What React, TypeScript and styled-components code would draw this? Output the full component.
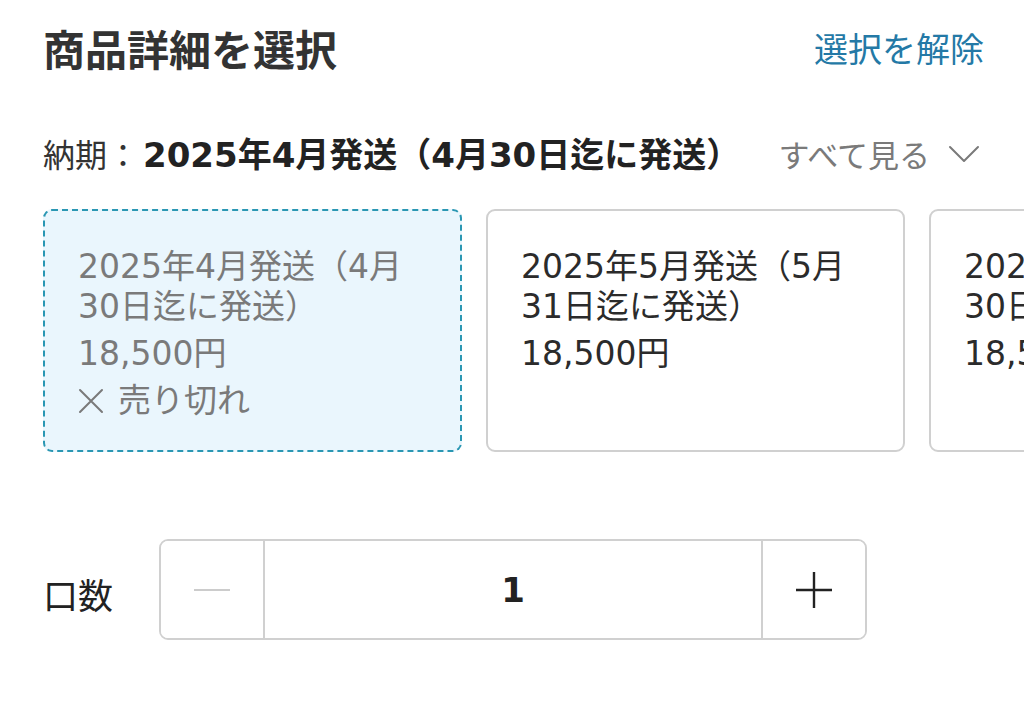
import React, { FC } from 'react'
import styled, { createGlobalStyle } from 'styled-components'

const GlobalStyle = createGlobalStyle`
  html, body {
    margin: 0;
    padding: 0;
    background: #ffffff;
    overflow: hidden;
  }
  body {
    font-family: "Noto Sans CJK JP", "Noto Sans", sans-serif;
    color: #333333;
  }
`

// digits in the reference are wider than Noto's, DejaVu matches them better
const numFont = `"DejaVu Sans", "Noto Sans CJK JP", sans-serif`

interface Option {
  id: string
  label: string
  price: string
  soldOut?: boolean
  selected?: boolean
}

const options: Option[] = [
  { id: 'apr', label: '2025年4月発送（4月30日迄に発送）', price: '18,500円', soldOut: true, selected: true },
  { id: 'may', label: '2025年5月発送（5月31日迄に発送）', price: '18,500円' },
  { id: 'jun', label: '2025年6月発送（6月30日迄に発送）', price: '18,500円' },
]

const Page = styled.div`
  padding: 24px 40px 0 43px;
`

const Header = styled.div`
  display: flex;
  align-items: center;
  justify-content: space-between;
  height: 48px;
`

const Title = styled.h1`
  margin: 0;
  font-size: 42px;
  font-weight: 700;
  line-height: 48px;
  color: #333333;
`

const ClearLink = styled.a`
  font-size: 34px;
  line-height: 48px;
  color: #2479a6;
  text-decoration: none;
  cursor: pointer;
`

const DeliveryRow = styled.div`
  display: flex;
  align-items: center;
  justify-content: space-between;
  height: 44px;
  margin-top: 60px;
`

const DeliveryText = styled.div`
  font-size: 32px;
  line-height: 44px;
  color: #333333;
  white-space: nowrap;
`

const DeliveryValue = styled.span`
  margin-left: 4px;
  font-family: ${numFont};
  font-size: 34px;
  font-weight: 700;
  color: #222222;
`

const SeeAll = styled.button`
  display: flex;
  align-items: center;
  gap: 18px;
  padding: 0;
  border: none;
  background: none;
  font-family: inherit;
  font-size: 31px;
  line-height: 44px;
  color: #7a7a7a;
  margin-right: 4px;
  cursor: pointer;
`

const CardRow = styled.div`
  display: flex;
  gap: 24px;
  margin-top: 33px;
  margin-right: -40px;
  overflow: hidden;
`

const Card = styled.div<{ $selected?: boolean }>`
  flex: 0 0 419px;
  height: 243px;
  box-sizing: border-box;
  padding: 36px 20px 0 33px;
  border-radius: 9px;
  border: 2px ${({ $selected }) => ($selected ? 'dashed #2a97b3' : 'solid #d0d0d0')};
  background: ${({ $selected }) => ($selected ? '#eaf6fd' : '#ffffff')};
  color: ${({ $selected }) => ($selected ? '#7a7a7a' : '#2b2b2b')};
  font-family: ${numFont};
  font-size: 33px;
`

const CardLabel = styled.div`
  line-height: 40px;
  max-width: 332px;
`

const CardLine = styled.div`
  display: flex;
  align-items: center;
  gap: 14px;
  line-height: 40px;
  margin-top: 7px;
`

const QtyRow = styled.div`
  display: flex;
  align-items: center;
  margin-top: 87px;
`

const QtyLabel = styled.div`
  width: 116px;
  font-size: 35px;
  line-height: 44px;
  padding-top: 8px;
  color: #222222;
`

const Stepper = styled.div`
  display: flex;
  width: 708px;
  height: 101px;
  box-sizing: border-box;
  border: 2px solid #d0d0d0;
  border-radius: 9px;
  overflow: hidden;
`

const StepButton = styled.button<{ $disabled?: boolean }>`
  flex: 0 0 102px;
  display: flex;
  align-items: center;
  justify-content: center;
  padding: 0;
  border: none;
  background: #ffffff;
  color: ${({ $disabled }) => ($disabled ? '#cccccc' : '#222222')};
  cursor: ${({ $disabled }) => ($disabled ? 'default' : 'pointer')};
`

const StepValue = styled.div`
  flex: 1;
  display: flex;
  align-items: center;
  justify-content: center;
  border-left: 2px solid #d0d0d0;
  border-right: 2px solid #d0d0d0;
  font-family: ${numFont};
  font-size: 34px;
  font-weight: 700;
  color: #222222;
`

const Chevron: FC = () => (
  <svg width="32" height="20" viewBox="0 0 32 20" fill="none">
    <path d="M2 3 L16 17 L30 3" stroke="#7a7a7a" strokeWidth="2" strokeLinecap="round" strokeLinejoin="round" />
  </svg>
)

const Cross: FC = () => (
  <svg width="26" height="26" viewBox="0 0 26 26" fill="none">
    <path d="M2 2 L24 24 M24 2 L2 24" stroke="currentColor" strokeWidth="2" strokeLinecap="round" />
  </svg>
)

const Minus: FC = () => (
  <svg width="36" height="4" viewBox="0 0 36 4">
    <path d="M0 2 H36" stroke="currentColor" strokeWidth="2" />
  </svg>
)

const Plus: FC = () => (
  <svg width="36" height="36" viewBox="0 0 36 36">
    <path d="M0 18 H36 M18 0 V36" stroke="currentColor" strokeWidth="2.4" />
  </svg>
)

const App: FC = () => (
  <>
    <GlobalStyle />
    <Page>
      <Header>
        <Title>商品詳細を選択</Title>
        <ClearLink>選択を解除</ClearLink>
      </Header>

      <DeliveryRow>
        <DeliveryText>
          納期：<DeliveryValue>2025年4月発送（4月30日迄に発送）</DeliveryValue>
        </DeliveryText>
        <SeeAll>
          すべて見る
          <Chevron />
        </SeeAll>
      </DeliveryRow>

      <CardRow>
        {options.map((o) => (
          <Card key={o.id} $selected={o.selected}>
            <CardLabel>{o.label}</CardLabel>
            <CardLine>{o.price}</CardLine>
            {o.soldOut && (
              <CardLine>
                <Cross />
                売り切れ
              </CardLine>
            )}
          </Card>
        ))}
      </CardRow>

      <QtyRow>
        <QtyLabel>口数</QtyLabel>
        <Stepper>
          <StepButton $disabled>
            <Minus />
          </StepButton>
          <StepValue>1</StepValue>
          <StepButton>
            <Plus />
          </StepButton>
        </Stepper>
      </QtyRow>
    </Page>
  </>
)

export default App
